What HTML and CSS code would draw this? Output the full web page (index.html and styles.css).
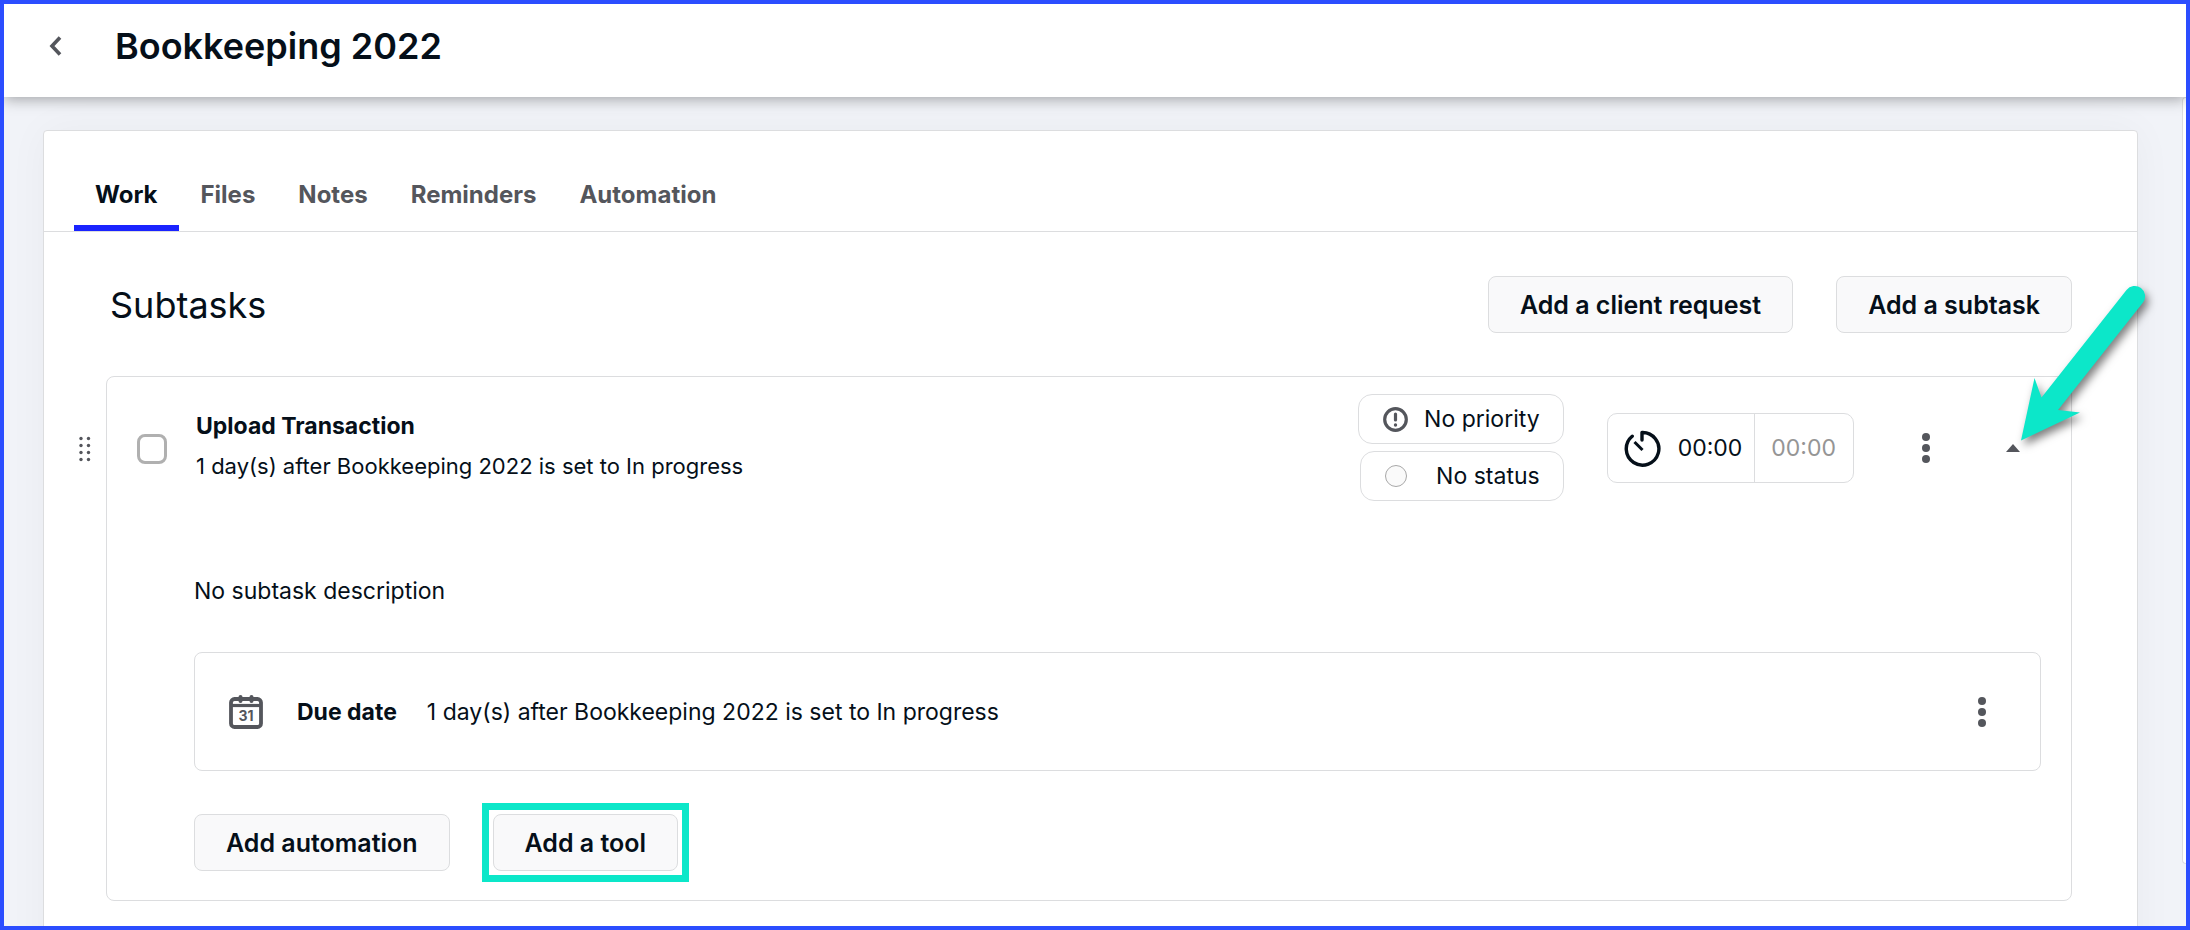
FILE: index.html
```html
<!DOCTYPE html>
<html lang="en">
<head>
  <meta charset="UTF-8" />
  <meta name="viewport" content="width=device-width, initial-scale=1.0"/>
  <title>Bookkeeping 2022</title>
  <link rel="stylesheet" href="styles.css">
</head>
<body>

  <div class="app">
    <header class="topbar">
      <button class="icon-btn back" aria-label="Back">
        <svg width="13" height="20" viewBox="0 0 13 20"><path d="M11 1.500 3 10l8 8.500" fill="none" stroke="#54565c" stroke-width="3.600"/></svg>
      </button>
      <h1>Bookkeeping 2022</h1>
    </header>

    <div class="content">
      <main class="panel">
        <nav class="tabs">
          <a class="tab active" href="#work">Work</a>
          <a class="tab" href="#files">Files</a>
          <a class="tab" href="#notes">Notes</a>
          <a class="tab" href="#reminders">Reminders</a>
          <a class="tab" href="#automation">Automation</a>
        </nav>

        <section class="subtasks" id="work">
          <div class="section-head">
            <h2>Subtasks</h2>
            <div class="actions">
              <button class="btn">Add a client request</button>
              <button class="btn">Add a subtask</button>
            </div>
          </div>

          <div class="task">
            <svg class="drag" width="12" height="26" viewBox="0 0 12 26" fill="#54565c">
              <circle cx="2" cy="2.500" r="1.700"/><circle cx="9.500" cy="2.500" r="1.700"/>
              <circle cx="2" cy="9.500" r="1.700"/><circle cx="9.500" cy="9.500" r="1.700"/>
              <circle cx="2" cy="16.500" r="1.700"/><circle cx="9.500" cy="16.500" r="1.700"/>
              <circle cx="2" cy="23.500" r="1.700"/><circle cx="9.500" cy="23.500" r="1.700"/>
            </svg>

            <div class="task-card">
              <div class="task-row">
                <input class="check" type="checkbox" id="done">
                <div class="task-text">
                  <label class="task-title" for="done">Upload Transaction</label>
                  <p class="task-when">1 day(s) after Bookkeeping 2022 is set to In progress</p>
                </div>

                <div class="pills">
                  <button class="pill">
                    <svg width="25" height="25" viewBox="0 0 25 25">
                      <circle cx="12.500" cy="12.500" r="10.800" fill="none" stroke="#54565c" stroke-width="3.200"/>
                      <path d="M12.500 7v6" stroke="#54565c" stroke-width="3.200" stroke-linecap="round"/>
                      <circle cx="12.500" cy="18" r="1.700" fill="#54565c"/>
                    </svg>
                    No priority
                  </button>
                  <button class="pill status">
                    <span class="status-dot"></span>
                    No status
                  </button>
                </div>

                <div class="timer">
                  <button class="time">
                    <svg width="38" height="38" viewBox="0 0 38 38" fill="none" stroke="#050f19" stroke-width="3.400">
                      <path d="M19 11V3.500A16.300 16.300 0 1 1 9.200 7.200" stroke-linejoin="round" stroke-linecap="round"/>
                      <path d="M19.500 21 11.500 13" stroke-width="3"/>
                    </svg>
                    00:00
                  </button>
                  <button class="time budget">00:00</button>
                </div>

                <button class="icon-btn more" aria-label="More">
                  <svg width="8" height="30" viewBox="0 0 8 30" fill="#54565c"><circle cx="4" cy="4" r="4"/><circle cx="4" cy="15" r="4"/><circle cx="4" cy="26" r="4"/></svg>
                </button>
                <button class="icon-btn caret" aria-label="Collapse">
                  <svg width="14" height="8" viewBox="0 0 14 8"><path d="M0 8 7 0l7 8z" fill="#54565c"/></svg>
                </button>
              </div>

              <div class="task-body">
                <p class="desc">No subtask description</p>

                <div class="tool">
                  <svg width="34" height="34" viewBox="0 0 34 34">
                    <rect x="2" y="4" width="30" height="28" rx="3.500" fill="none" stroke="#54565c" stroke-width="3.800"/>
                    <path d="M2 10.500h30" stroke="#54565c" stroke-width="3.200"/>
                    <path d="M11.500 2v4M22.500 2v4" stroke="#54565c" stroke-width="4" stroke-linecap="round"/>
                    <text class="cal-day" x="17" y="26" text-anchor="middle">31</text>
                  </svg>
                  <strong>Due date</strong>
                  <span>1 day(s) after Bookkeeping 2022 is set to In progress</span>
                  <button class="icon-btn tool-more" aria-label="More">
                    <svg width="8" height="30" viewBox="0 0 8 30" fill="#54565c"><circle cx="4" cy="4" r="4"/><circle cx="4" cy="15" r="4"/><circle cx="4" cy="26" r="4"/></svg>
                  </button>
                </div>

                <div class="tool-actions">
                  <button class="btn">Add automation</button>
                  <div class="highlight"><button class="btn">Add a tool</button></div>
                </div>
              </div>

              <svg class="arrow" width="160" height="190" viewBox="0 0 160 190">
                <path d="M20 164.500 33.500 102 40.500 121.500 125.500 14A10 10 0 0 1 142 26.500L57 134 79 136.500z" fill="#0ce7c9"/>
              </svg>
            </div>
          </div>
        </section>
      </main>

      <aside class="side"></aside>
    </div>
  </div>

</body>
</html>
```
FILE: styles.css
```css
* {
  box-sizing: border-box;
}

body {
  font-family: Inter, "Liberation Sans", sans-serif;
  font-size: 23px;
  color: #050f19;
  margin: 0;
}

h1, h2, p {
  margin: 0;
}

button {
  font-family: inherit;
  font-size: 23px;
  color: inherit;
  cursor: pointer;
}

svg {
  display: block;
  flex: none;
}

.app {
  display: flex;
  flex-direction: column;
  height: 100vh;
  border: 4px solid #2b4dff;
  background: #f1f3f8;
  overflow: hidden;
}

/* top bar */
.topbar {
  display: flex;
  align-items: center;
  gap: 53px;
  flex: none;
  position: relative;
  z-index: 1;
  padding: 20px 45px 29px;
  background: #fff;
  box-shadow: 0 2px 14px rgba(0, 0, 0, 0.35);
}

.topbar h1 {
  font-size: 36px;
  font-weight: 600;
  line-height: 44px;
}

.icon-btn {
  padding: 0;
  border: none;
  background: none;
}

/* page */
.content {
  display: flex;
  align-items: flex-start;
  flex: 1;
}

.panel {
  flex: 1;
  min-height: 100vh;
  margin: 33px 44px 0 39px;
  border: 1px solid #dcdddf;
  border-radius: 4px;
  background: #fff;
  box-shadow: 0 0 40px rgba(0, 0, 0, 0.04);
}

.side {
  width: 4px;
  height: 767px;
  border: 1px solid #dcdddf;
  border-right: none;
  border-radius: 4px 0 0 4px;
  background: #fff;
}

.tabs {
  display: flex;
  gap: 1px;
  padding: 30px 30px 0;
  border-bottom: 1px solid #dcdddf;
}

.tab {
  padding: 19px 21px 15px;
  border-bottom: 6px solid transparent;
  font-size: 24px;
  line-height: 30px;
  font-weight: 700;
  color: #54565c;
  text-decoration: none;
}

.tab.active {
  color: #050f19;
  border-bottom-color: #1a23ff;
}

.subtasks {
  padding: 44px 65px 44px 35px;
}

.section-head {
  display: flex;
  justify-content: space-between;
  align-items: center;
  padding-left: 31px;
  margin-bottom: 43px;
}

.section-head h2 {
  font-size: 36px;
  font-weight: 400;
}

.actions {
  display: flex;
  gap: 43px;
}

.btn {
  height: 57px;
  padding: 0 31px;
  border: 1px solid #dcdddf;
  border-radius: 8px;
  background: #f9f9fa;
  font-size: 25px;
  font-weight: 600;
}

/* subtask */
.task {
  display: flex;
  gap: 15px;
}

.drag {
  margin-top: 60px;
}

.task-card {
  flex: 1;
  position: relative;
  border: 1px solid #dcdddf;
  border-radius: 8px;
}

.task-row {
  display: flex;
  align-items: center;
  padding: 17px 51px 0 30px;
}

.check {
  appearance: none;
  width: 30px;
  height: 30px;
  margin: 2px 29px 0 0;
  border: 3px solid #b0b0b0;
  border-radius: 8px;
  background: #fff;
}

.check:checked {
  background: #1a23ff;
}

.task-text {
  flex: 1;
  padding-bottom: 4px;
  line-height: 40px;
}

.task-title {
  font-weight: 700;
}

.task-when {
  font-size: 22px;
}

.pills {
  display: flex;
  flex-direction: column;
  align-items: flex-end;
  gap: 7px;
  margin-right: 43px;
}

.pill {
  display: flex;
  align-items: center;
  gap: 16px;
  height: 50px;
  padding: 0 23px 0 24px;
  border: 1px solid #dcdddf;
  border-radius: 14px;
  background: #fff;
}

.pill.status {
  gap: 29px;
}

.status-dot {
  width: 22px;
  height: 22px;
  border: 1px solid #a8a8a8;
  border-radius: 50%;
  background: #fafafa;
}

.timer {
  display: flex;
  height: 70px;
  border: 1px solid #dcdddf;
  border-radius: 10px;
}

.time {
  display: flex;
  align-items: center;
  gap: 17px;
  padding: 0 12px 0 15px;
  border: none;
  background: none;
}

.time.budget {
  padding: 0 17px 0 16px;
  border-left: 1px solid #dcdddf;
  color: #959595;
}

.more {
  margin: 0 76px 0 68px;
}

.task-body {
  padding: 72px 30px 29px 87px;
}

.desc {
  line-height: 36px;
}

.tool {
  display: flex;
  align-items: center;
  height: 119px;
  margin: 43px 0;
  padding: 0 54px 0 34px;
  border: 1px solid #dcdddf;
  border-radius: 8px;
}

.tool strong {
  margin: 0 30px 0 34px;
  font-weight: 700;
}

.tool-more {
  margin-left: auto;
}

.cal-day {
  font-size: 14px;
  font-weight: 700;
  fill: #54565c;
}

.tool-actions {
  display: flex;
  gap: 43px;
}

.highlight {
  outline: 7px solid #0ce7c9;
  outline-offset: 4px;
}

/* pointer over the collapse caret */
.arrow {
  position: absolute;
  top: -101px;
  right: -90px;
  filter: drop-shadow(3px 5px 4px rgba(0, 0, 0, 0.5));
}
```
